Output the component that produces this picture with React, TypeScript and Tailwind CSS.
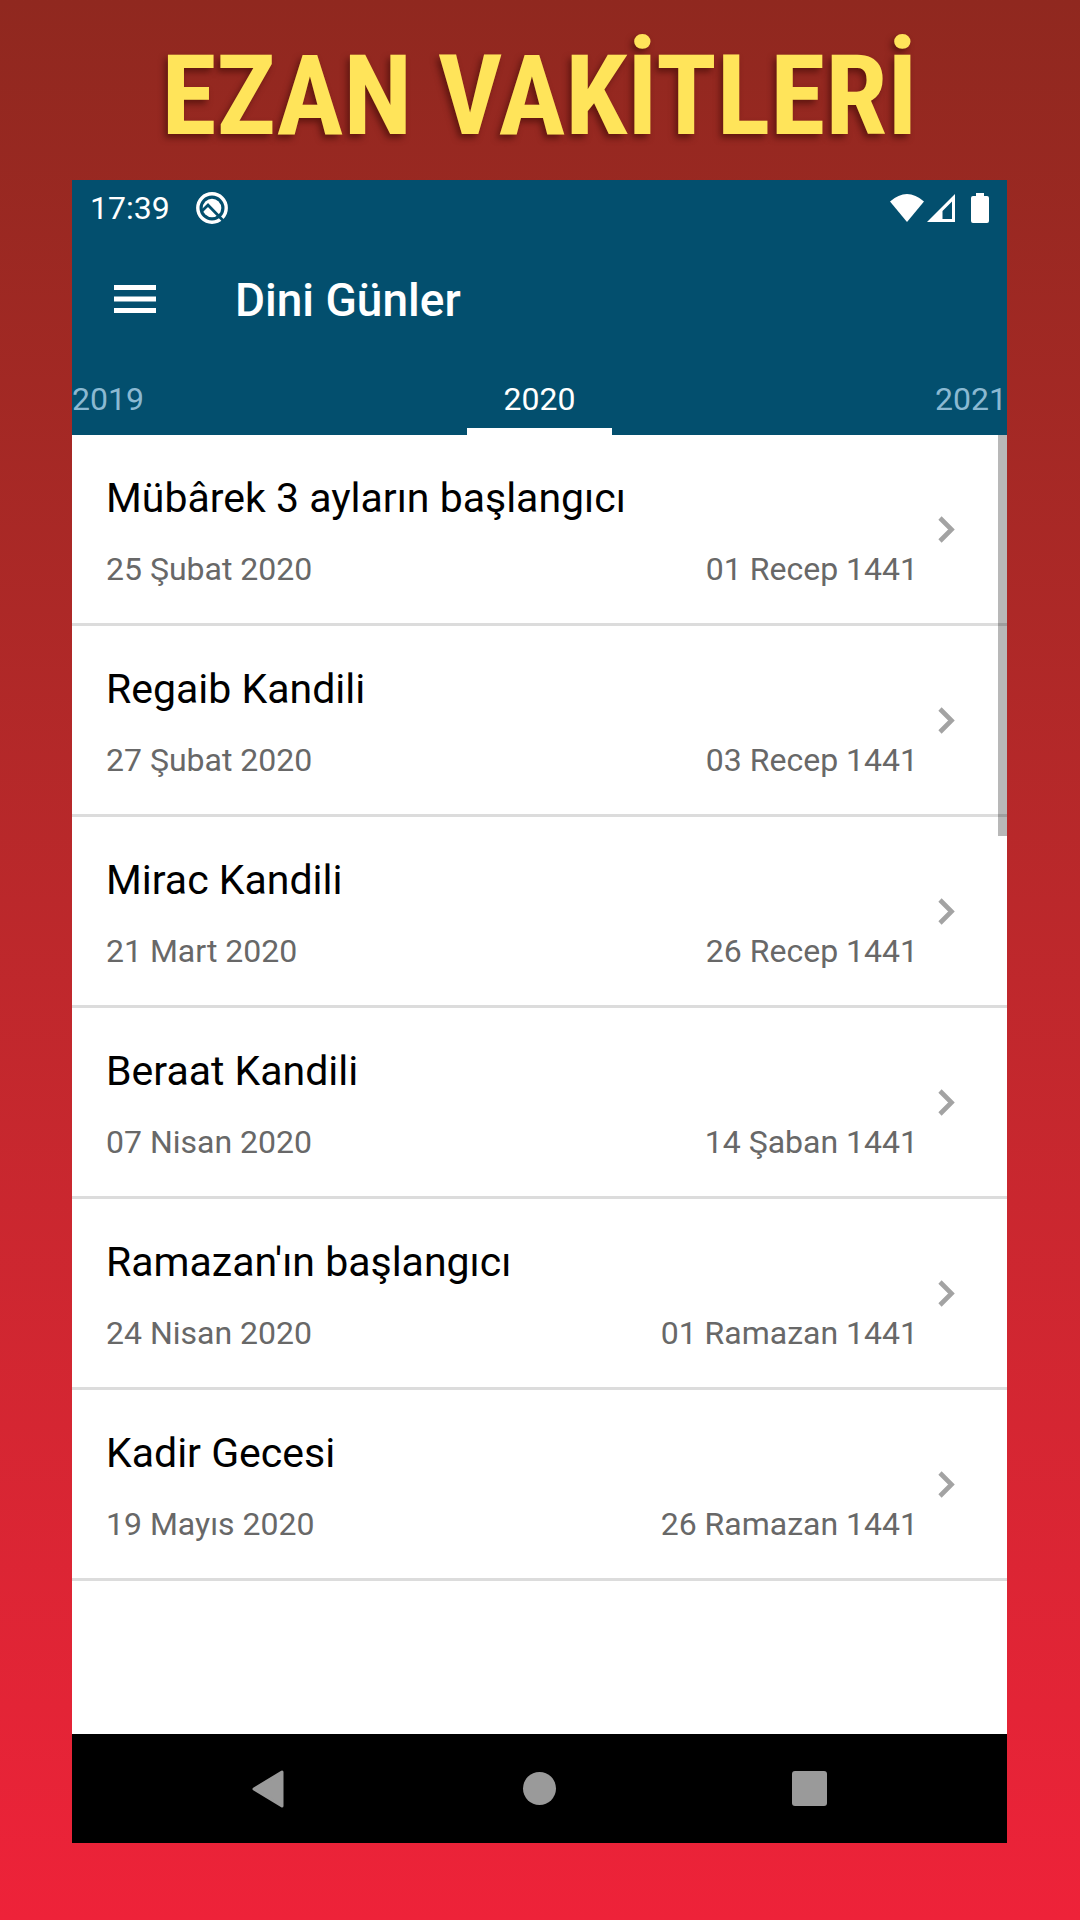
interface ReligiousDay {
  name: string;
  date: string;
  hijri: string;
}

const YEARS = ["2019", "2020", "2021"];

const DAYS: ReligiousDay[] = [
  { name: "Mübârek 3 ayların başlangıcı", date: "25 Şubat 2020", hijri: "01 Recep 1441" },
  { name: "Regaib Kandili", date: "27 Şubat 2020", hijri: "03 Recep 1441" },
  { name: "Mirac Kandili", date: "21 Mart 2020", hijri: "26 Recep 1441" },
  { name: "Beraat Kandili", date: "07 Nisan 2020", hijri: "14 Şaban 1441" },
  { name: "Ramazan'ın başlangıcı", date: "24 Nisan 2020", hijri: "01 Ramazan 1441" },
  { name: "Kadir Gecesi", date: "19 Mayıs 2020", hijri: "26 Ramazan 1441" },
];

function StatusBar() {
  return (
    <div className="flex h-14 items-center justify-between px-[18px] text-[32px] leading-8">
      <div className="flex items-center gap-[26px]">
        <span>17:39</span>
        <svg viewBox="0 0 32 32" className="size-8" aria-hidden="true">
          <circle cx="16" cy="16" r="14.2" fill="none" stroke="currentColor" strokeWidth="3.4" />
          <circle cx="16" cy="16" r="9.3" fill="currentColor" />
          <path d="M6 19L12 13L28 29.500" fill="none" stroke="#034f6e" strokeWidth="2.8" />
        </svg>
      </div>
      <div className="flex items-center">
        <svg viewBox="0 0 34 28" className="h-7 w-[34px]" aria-hidden="true">
          <path d="M0 7.500Q17 -7.500 34 7.500L17 28Z" fill="currentColor" />
        </svg>
        <svg viewBox="0 0 28 28" className="ml-[3px] size-7" aria-hidden="true">
          <path d="M0 28L28 0V28ZM15.500 17V25H25V7.500Z" fill="currentColor" fillRule="evenodd" />
        </svg>
        <svg viewBox="0 0 18 30" className="ml-4 h-[30px] w-[18px]" aria-hidden="true">
          <path d="M5 0H13V3H16Q18 3 18 5V28Q18 30 16 30H2Q0 30 0 28V5Q0 3 2 3H5Z" fill="currentColor" />
        </svg>
      </div>
    </div>
  );
}

function Toolbar() {
  return (
    <div className="flex h-[126px] items-center gap-[79px] pl-[42px]">
      <button type="button" aria-label="Menü" className="flex">
        <svg viewBox="0 0 42 28" className="h-7 w-[42px]" aria-hidden="true">
          <path d="M0 0H42V5H0ZM0 11.500H42V16.500H0ZM0 23H42V28H0Z" fill="currentColor" />
        </svg>
      </button>
      <h2 className="pt-0.5 text-[46px] leading-[52px] font-medium">Dini Günler</h2>
    </div>
  );
}

function YearTabs() {
  return (
    <div role="tablist" className="flex h-[73px] justify-between text-[32px] leading-8">
      {YEARS.map((year) => (
        <button
          key={year}
          type="button"
          role="tab"
          aria-selected={year === "2020"}
          className={
            year === "2020"
              ? "w-[145px] border-b-[7px] border-white pt-2"
              : "pt-px text-[#8bb9d2]"
          }
        >
          {year}
        </button>
      ))}
    </div>
  );
}

function DayRow({ day }: { day: ReligiousDay }) {
  return (
    <li className="border-b-[3px] border-[#dcdcdc]">
      <a href="#" className="flex h-[188px] items-center gap-5 pr-[52px] pl-[34px]">
        <div className="flex-1 pt-1">
          <h3 className="text-[41px] leading-[48px] text-black">{day.name}</h3>
          <div className="mt-[27px] flex justify-between text-[32px] leading-10 text-[#686868]">
            <span>{day.date}</span>
            <span>{day.hijri}</span>
          </div>
        </div>
        <svg viewBox="0 0 17 27" className="h-[27px] w-[17px] text-[#a3a3a3]" aria-hidden="true">
          <path d="M2 2L13.500 13.500L2 25" fill="none" stroke="currentColor" strokeWidth="4.6" />
        </svg>
      </a>
    </li>
  );
}

function NavigationBar() {
  return (
    <nav className="flex h-[109px] items-center justify-center bg-black text-[#9a9a9a]">
      <button type="button" aria-label="Geri" className="flex w-[270px] justify-center">
        <svg viewBox="0 0 36 38" className="h-[38px] w-9" aria-hidden="true">
          <path d="M2 19L30 2V36Z" fill="currentColor" stroke="currentColor" strokeWidth="3" strokeLinejoin="round" />
        </svg>
      </button>
      <button type="button" aria-label="Ana ekran" className="flex w-[270px] justify-center">
        <span className="size-[33px] rounded-full bg-[#9a9a9a]" />
      </button>
      <button type="button" aria-label="Son uygulamalar" className="flex w-[270px] justify-center">
        <span className="size-[35px] rounded-[3px] bg-[#9a9a9a]" />
      </button>
    </nav>
  );
}

export default function App() {
  return (
    <div className="flex min-h-screen flex-col bg-linear-to-b from-[#90281f] to-[#ee2239] pr-[73px] pb-[77px] pl-[72px] font-[Roboto,sans-serif]">
      <h1 className="flex h-[180px] items-center justify-center pt-3 font-['Liberation_Sans_Narrow','Roboto_Condensed',Roboto,sans-serif] text-[112px] leading-none font-bold text-[#ffe45a] [text-shadow:-3px_4px_6px_rgba(60,10,5,0.6)]">
        EZAN VAKİTLERİ
      </h1>
      <main className="flex flex-1 flex-col bg-white">
        <header className="bg-[#034f6e] text-white">
          <StatusBar />
          <Toolbar />
          <YearTabs />
        </header>
        <div className="relative flex-1">
          <ul>
            {DAYS.map((day) => (
              <DayRow key={day.name} day={day} />
            ))}
          </ul>
          <div className="absolute top-0 right-0 h-[401px] w-[9px] bg-black/28" />
        </div>
        <NavigationBar />
      </main>
    </div>
  );
}
